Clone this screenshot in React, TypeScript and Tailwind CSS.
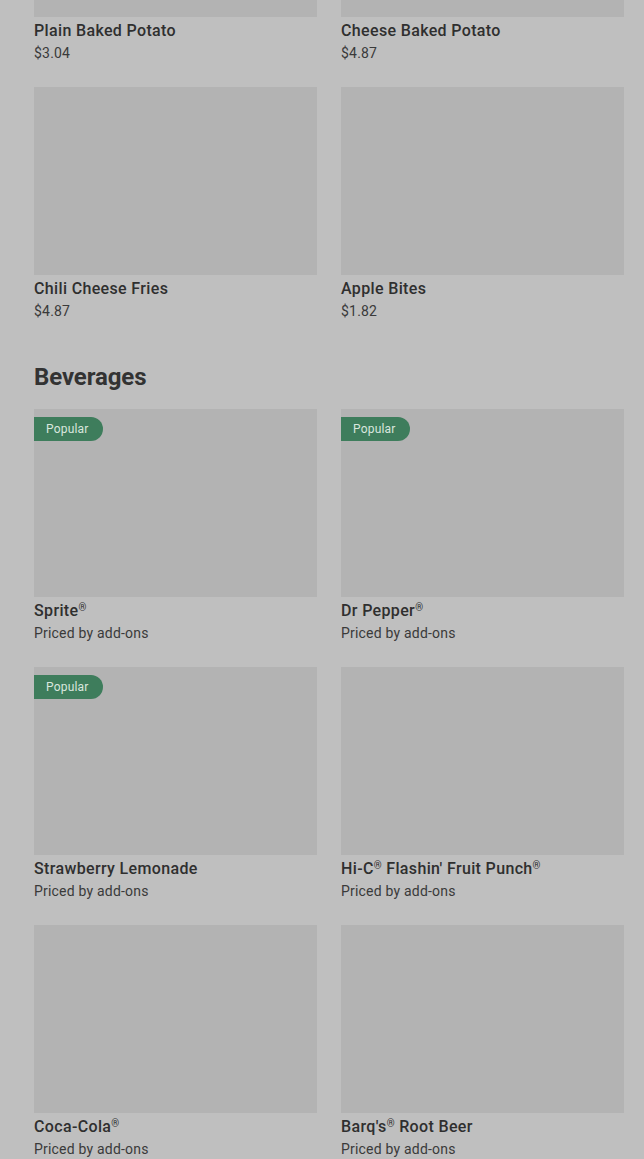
import React from "react";

type Item = { name: string; price: string; popular?: boolean };

const sides: Item[] = [
  { name: "Plain Baked Potato", price: "$3.04" },
  { name: "Cheese Baked Potato", price: "$4.87" },
  { name: "Chili Cheese Fries", price: "$4.87" },
  { name: "Apple Bites", price: "$1.82" },
];

const beverages: Item[] = [
  { name: "Sprite®", price: "Priced by add-ons", popular: true },
  { name: "Dr Pepper®", price: "Priced by add-ons", popular: true },
  { name: "Strawberry Lemonade", price: "Priced by add-ons", popular: true },
  { name: "Hi-C® Flashin' Fruit Punch®", price: "Priced by add-ons" },
  { name: "Coca-Cola®", price: "Priced by add-ons" },
  { name: "Barq's® Root Beer", price: "Priced by add-ons" },
];

// small raised ® like the reference
function Name({ text }: { text: string }) {
  const parts = text.split("®");
  return (
    <>
      {parts.map((p, i) => (
        <React.Fragment key={i}>
          {p}
          {i < parts.length - 1 && (
            <span className="relative -top-[5px] text-[10px] leading-none">®</span>
          )}
        </React.Fragment>
      ))}
    </>
  );
}

function Card({ item }: { item: Item }) {
  return (
    <div className="flex flex-col">
      <div className="relative h-[188px] bg-[#b3b3b3]">
        {item.popular && (
          <span className="absolute left-0 top-2 flex h-6 items-center rounded-r-full bg-[#3e7d5c] pl-3 pr-[14px] text-[12px] tracking-[0.2px] text-[#d9e6de]">
            Popular
          </span>
        )}
      </div>
      <div className="mt-1 h-5 text-[16px] leading-5 font-medium tracking-[0.35px] text-[#2f2f2f]">
        <Name text={item.name} />
      </div>
      <div className="mt-[2px] h-5 text-[14px] leading-5 tracking-[0.2px] text-[#3a3a3a]">
        {item.price}
      </div>
    </div>
  );
}

export default function App() {
  return (
    <div
      className="min-h-screen overflow-hidden bg-[#bfbfbf] pl-[34px] pr-[20px]"
      style={{ fontFamily: "Roboto, 'Liberation Sans', sans-serif" }}
    >
      <div className="-mt-[171px] grid grid-cols-2 gap-x-6 gap-y-6">
        {sides.map((s) => (
          <Card key={s.name} item={s} />
        ))}
      </div>
      <h2 className="mt-10 mb-4 text-[24px] leading-8 font-bold tracking-[-0.1px] text-[#333333]">
        Beverages
      </h2>
      <div className="grid grid-cols-2 gap-x-6 gap-y-6 pb-10">
        {beverages.map((s) => (
          <Card key={s.name} item={s} />
        ))}
      </div>
    </div>
  );
}
